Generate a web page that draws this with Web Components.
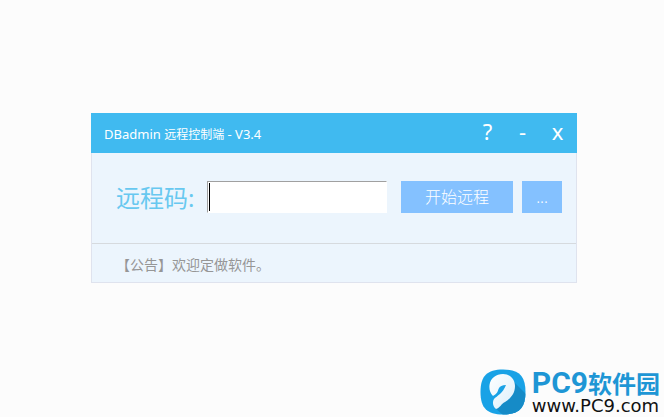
<!DOCTYPE html>
<html lang="zh-CN">
<head>
<meta charset="utf-8">
<meta name="viewport" content="width=device-width, initial-scale=1">
<title>DBadmin 远程控制端 - V3.4</title>
<style>
  body { margin: 0; background: #fcfcfc; font-family: "Noto Sans", "Noto Sans CJK SC", sans-serif; }
  .cjk { font-size: 12px; }
</style>
</head>
<body>
<remote-desktop-page>
  <app-window>
    <span slot="heading">DBadmin <span class="cjk">远程控制端</span> - V3.4</span>
    <remote-form></remote-form>
    <notice-bar slot="footer">【公告】欢迎定做软件。</notice-bar>
  </app-window>
  <site-brand slot="brand"></site-brand>
</remote-desktop-page>

<script>
  const define = (name, html, setup) => {
    const template = document.createElement('template');
    template.innerHTML = html;
    customElements.define(name, class extends HTMLElement {
      constructor() {
        super();
        this.attachShadow({ mode: 'open' }).append(template.content.cloneNode(true));
      }
      connectedCallback() { if (setup) setup(this, this.shadowRoot); }
    });
  };

  define('remote-desktop-page', `
    <style>
      :host { display: flex; flex-direction: column; box-sizing: border-box; min-height: 100vh; }
      main { padding: 113px 87px 24px 91px; }
      footer { display: flex; justify-content: flex-end; margin-top: auto; padding: 0 4px 2px 0; }
    </style>
    <main><slot></slot></main>
    <footer><slot name="brand"></slot></footer>`);

  define('title-button', `
    <style>
      :host { display: block; }
      button { width: 35px; height: 40px; padding: 0 0 4px; border: 0; background: none; color: #fff; font: 22px/36px "Noto Sans", sans-serif; }
    </style>
    <button type="button"><slot></slot></button>`,
    (el, root) => root.querySelector('button').setAttribute('aria-label', el.getAttribute('label')));

  define('app-window', `
    <style>
      :host { display: block; background: #ecf5fd; }
      header { display: flex; align-items: center; height: 40px; padding: 0 2px 0 13px; background: #40baf0; color: #fff; }
      h1 { flex: 1; margin: 0; padding-top: 2px; font-size: 13px; font-weight: 400; line-height: 20px; }
      .body { border: 1px solid #dfe3ee; border-top: 0; }
    </style>
    <header>
      <h1><slot name="heading"></slot></h1>
      <title-button label="帮助">?</title-button>
      <title-button label="最小化">-</title-button>
      <title-button label="关闭">x</title-button>
    </header>
    <div class="body"><slot></slot><slot name="footer"></slot></div>`);

  define('action-button', `
    <style>
      :host { display: block; flex: none; }
      button { width: 100%; height: 32px; padding: 0; border: 0; background: #84c1ff; color: #fff; font: 300 16px/32px "Noto Sans", "Noto Sans CJK SC", sans-serif; white-space: nowrap; }
    </style>
    <button type="button"><slot></slot></button>`);

  define('remote-form', `
    <style>
      :host { display: block; }
      form { display: flex; align-items: center; padding: 28px 14px 30px 24px; }
      label { flex: none; width: 91px; padding-top: 2px; box-sizing: border-box; height: 32px; color: #68c8f0; font-size: 24px; line-height: 30px; white-space: nowrap; }
      .field { display: flex; flex: 1; min-width: 0; box-sizing: border-box; height: 32px; border: 1px solid #fff; border-top-color: #a0a0a0; border-left-color: #a0a0a0; background: #fff; }
      .caret { width: 1px; margin: 1px 0 1px 1px; background: #000; }
      input { flex: 1; min-width: 0; padding: 0 4px; border: 0; outline: 0; background: none; font: 20px "Noto Sans", sans-serif; }
      .start { width: 112px; margin-left: 14px; }
      .more { width: 40px; margin-left: 9px; }
    </style>
    <form>
      <label for="code">远程码:</label>
      <div class="field"><span class="caret"></span><input id="code" type="text" autocomplete="off"></div>
      <action-button class="start">开始远程</action-button>
      <action-button class="more">...</action-button>
    </form>`);

  define('notice-bar', `
    <style>
      :host { display: block; border-top: 1px solid #d6dade; }
      p { margin: 0; padding: 11px 24px 7px; color: #969696; font-size: 14px; line-height: 20px; }
    </style>
    <p><slot></slot></p>`);

  define('site-brand', `
    <style>
      :host { display: block; }
      a { display: flex; align-items: center; gap: 6px; text-decoration: none; }
      svg { display: block; width: 46px; height: 46px; }
      .text { display: flex; flex-direction: column; }
      .name { display: flex; align-items: baseline; height: 28px; color: #1e96d5; font: 700 24px/28px "Noto Sans CJK SC", sans-serif; }
      .latin { font-family: Roboto, sans-serif; font-size: 30px; }
      .url { color: #111; font: 18px/18px "DejaVu Sans", sans-serif; }
    </style>
    <a href="#">
      <svg viewBox="0 0 46 46" aria-hidden="true">
        <defs>
          <linearGradient id="leaf" x1="0" y1="0" x2="1" y2="1"><stop offset="0" stop-color="#fff"/><stop offset="1" stop-color="#dceffb"/></linearGradient>
          <clipPath id="tile"><path d="M23 .5C39 .5 45.500 7 45.500 23S39 45.500 23 45.500.5 39 .5 23 7 .5 23 .5Z"/></clipPath>
        </defs>
        <g clip-path="url(#tile)">
          <rect width="46" height="46" fill="#19a2e6"/>
          <path d="M31 10 46 25V46H23L15 39 25 28Z" fill="#168bc7"/>
        </g>
        <path d="M13 27C10 24 9 20 9.500 16 10.500 9 16 5 23 5 30 5 35 10 35 17 35 25 30 30 25 33 21 35 20 39 16 40 13 38 12 33 14 30 17 27 23 24 26 16 22 16 20 17 18.500 20 17.500 24 16 25 13 27Z" fill="url(#leaf)"/>
      </svg>
      <span class="text"><span class="name"><span class="latin">PC9</span>软件园</span><span class="url">www.PC9.com</span></span>
    </a>`);
</script>
</body>
</html>
